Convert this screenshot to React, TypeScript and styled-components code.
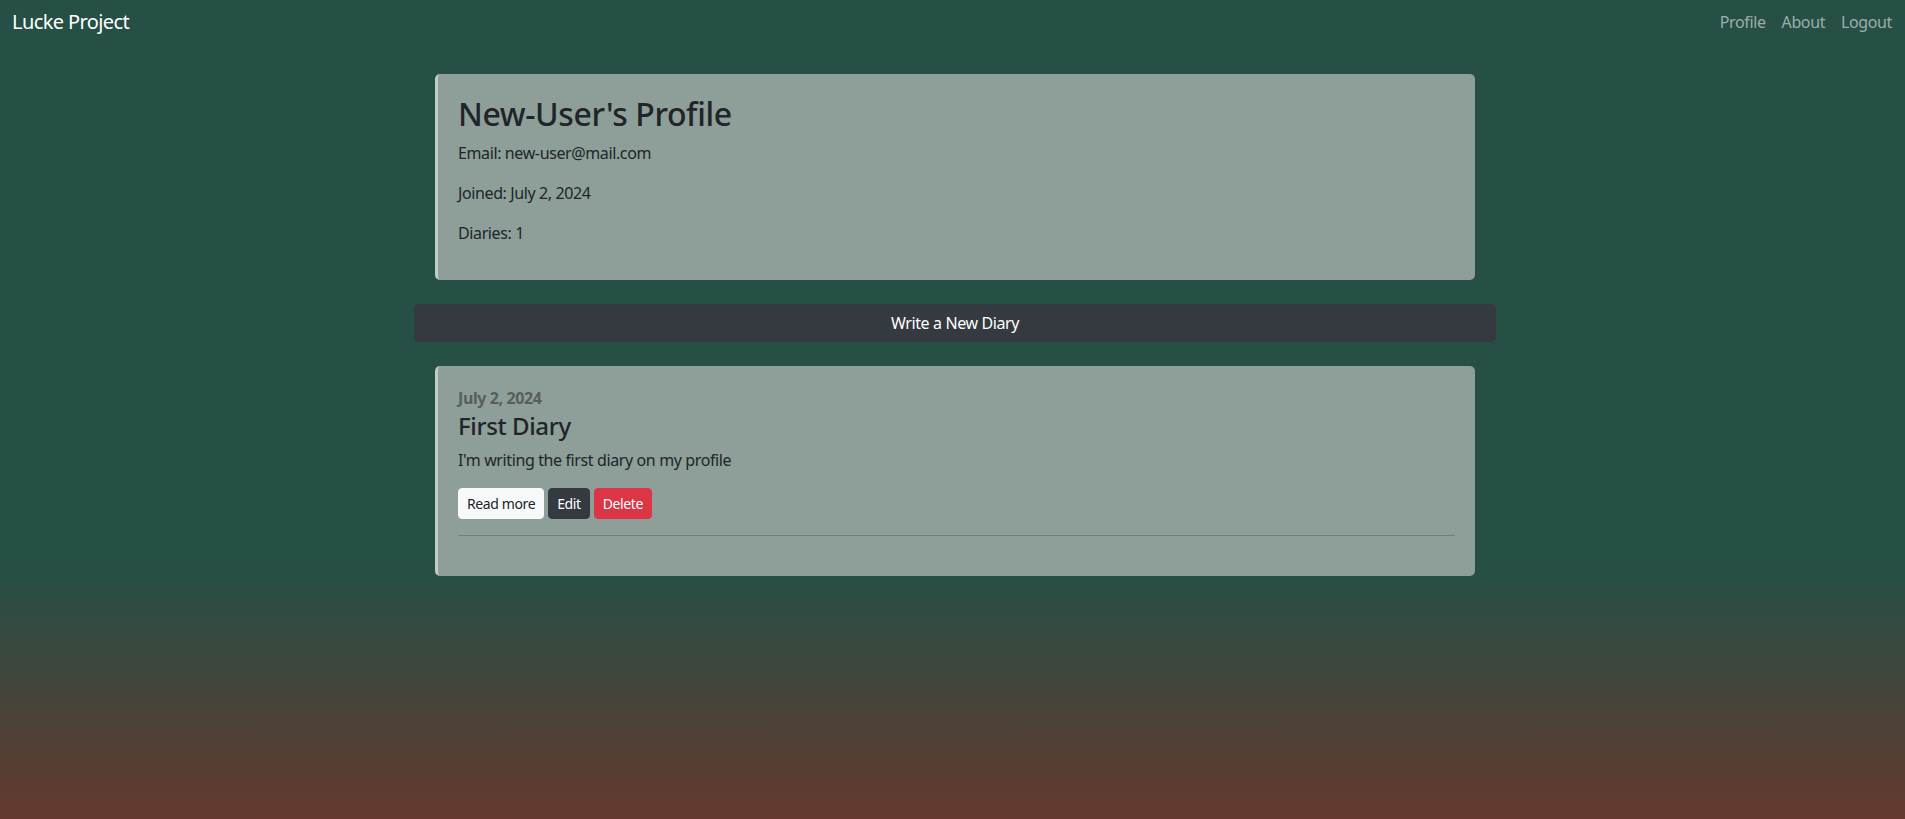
import React from "react";
import styled, { createGlobalStyle } from "styled-components";

const Global = createGlobalStyle`
  html, body { margin: 0; padding: 0; }
  body {
    min-height: 100vh;
    font-family: "Noto Sans", "Open Sans", sans-serif;
    letter-spacing: -0.024em;
    color: #212529;
    background: linear-gradient(to bottom, #264f45 0%, #264f45 70%, #65392f 100%);
    background-attachment: fixed;
  }
  * { box-sizing: border-box; }
`;

const Page = styled.div`
  min-height: 100vh;
  display: flex;
  flex-direction: column;
`;

const Navbar = styled.nav`
  height: 44px;
  display: flex;
  align-items: center;
  justify-content: space-between;
  padding: 0 5px 0 12px;
`;

const Brand = styled.a`
  font-size: 20px;
  letter-spacing: -0.03em;
  color: #fff;
  text-decoration: none;
  line-height: 30px;
`;

const NavLinks = styled.div`
  display: flex;
  align-items: center;
`;

const NavLink = styled.a`
  font-size: 16px;
  line-height: 24px;
  padding: 0 8px;
  color: rgba(255, 255, 255, 0.55);
  text-decoration: none;
`;

const Main = styled.main`
  width: 1082px;
  margin: 30px 0 0 calc(50% - 538.5px);
  display: flex;
  flex-direction: column;
  gap: 24px;
`;

const Card = styled.section<{ $top?: number; $bottom?: number }>`
  margin: 0 21px;
  background: #8d9f98;
  border-left: 3px solid #c3cbc8;
  border-radius: 5px;
  padding: ${(p) => p.$top ?? 20}px 20px ${(p) => p.$bottom ?? 20}px 20px;
`;

const Title = styled.h2`
  margin: 0 0 8px;
  font-size: 32px;
  font-weight: 500;
  line-height: 1.2;
`;

const Info = styled.p`
  margin: 0 0 16px;
  font-size: 16px;
  line-height: 24px;
`;

const WriteButton = styled.button`
  width: 100%;
  height: 38px;
  border: none;
  border-radius: 5px;
  background: #343a40;
  color: #fff;
  font-family: inherit;
  letter-spacing: inherit;
  font-size: 16px;
  line-height: 24px;
  cursor: pointer;
`;

const DiaryDate = styled.h6`
  margin: 0 0 3px;
  font-size: 16px;
  font-weight: 700;
  line-height: 1.2;
  color: #575e5c;
`;

const DiaryTitle = styled.h4`
  margin: 0 0 8px;
  font-size: 24px;
  font-weight: 500;
  line-height: 1.2;
`;

const Actions = styled.div`
  display: flex;
  gap: 4px;
`;

const SmallButton = styled.button<{ $variant: "light" | "dark" | "danger" }>`
  height: 31px;
  padding: 4px 8px;
  font-family: inherit;
  letter-spacing: inherit;
  font-size: 14px;
  line-height: 21px;
  border-radius: 4px;
  border: 1px solid
    ${(p) => (p.$variant === "light" ? "#f8f9fa" : p.$variant === "dark" ? "#343a40" : "#dc3545")};
  background: ${(p) => (p.$variant === "light" ? "#f8f9fa" : p.$variant === "dark" ? "#343a40" : "#dc3545")};
  color: ${(p) => (p.$variant === "light" ? "#212529" : "#fff")};
  cursor: pointer;
`;

const Rule = styled.hr`
  margin: 16px 0;
  border: 0;
  border-top: 1px solid rgba(33, 37, 41, 0.25);
`;

export default function App() {
  return (
    <Page>
      <Global />
      <Navbar>
        <Brand href="#">Lucke Project</Brand>
        <NavLinks>
          <NavLink href="#">Profile</NavLink>
          <NavLink href="#">About</NavLink>
          <NavLink href="#">Logout</NavLink>
        </NavLinks>
      </Navbar>
      <Main>
        <Card $top={21} $bottom={19}>
          <Title>New-User's Profile</Title>
          <Info>Email: new-user@mail.com</Info>
          <Info>Joined: July 2, 2024</Info>
          <Info>Diaries: 1</Info>
        </Card>
        <WriteButton>Write a New Diary</WriteButton>
        <Card $top={23} $bottom={24}>
          <DiaryDate>July 2, 2024</DiaryDate>
          <DiaryTitle>First Diary</DiaryTitle>
          <Info>I'm writing the first diary on my profile</Info>
          <Actions>
            <SmallButton $variant="light">Read more</SmallButton>
            <SmallButton $variant="dark">Edit</SmallButton>
            <SmallButton $variant="danger">Delete</SmallButton>
          </Actions>
          <Rule />
        </Card>
      </Main>
    </Page>
  );
}
